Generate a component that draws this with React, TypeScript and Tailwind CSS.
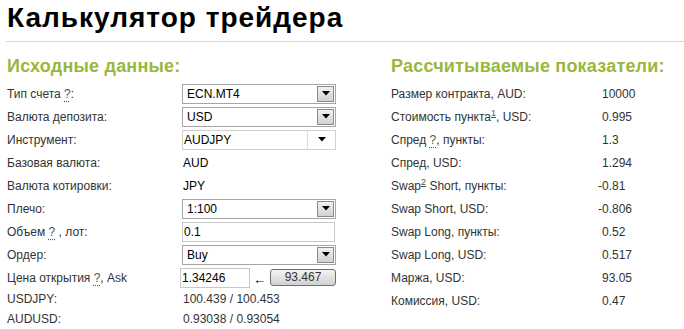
import type { ReactNode } from "react";

const FONT = "font-['Liberation_Sans',Arial,sans-serif]";

function Arrow() {
  return (
    <svg width="8" height="5" viewBox="0 0 8 5" className="block">
      <path d="M0 0H8L4 4.5Z" fill="#000" />
    </svg>
  );
}

function Help() {
  return <span className="text-[#555] underline decoration-dotted underline-offset-[3px]">?</span>;
}

function Note({ n }: { n: string }) {
  return <sup className="text-[9px] text-[#555] underline">{n}</sup>;
}

function SelectBox({ value }: { value: string }) {
  return (
    <div className="flex h-[20px] w-[154px] items-center border border-[#a5a5a5] bg-white">
      <span className="flex-1 pl-[4px] text-[12px] text-black">{value}</span>
      <span className="mr-[1px] flex h-[16px] w-[17px] items-center justify-center border border-[#8a8a8a] bg-gradient-to-b from-[#f0f0f0] to-[#d2d2d2]">
        <Arrow />
      </span>
    </div>
  );
}

function Combo({ value }: { value: string }) {
  return (
    <div className="flex h-[20px] w-[154px] items-center border border-[#d0d0d0] bg-white">
      <span className="flex-1 pl-[1px] text-[12px] text-black">{value}</span>
      <span className="flex h-full w-[28px] items-center justify-center border-l border-[#dcdcdc]">
        <Arrow />
      </span>
    </div>
  );
}

function Input({ value, w }: { value: string; w: string }) {
  return (
    <div className={`flex h-[20px] items-center border border-[#c8c8c8] bg-white pl-[1px] text-[12px] text-black ${w}`}>
      {value}
    </div>
  );
}

function Row({ label, children, h = "h-[23px]" }: { label: ReactNode; children: ReactNode; h?: string }) {
  return (
    <>
      <div className={`flex items-center ${h}`}>
        <span>{label}</span>
      </div>
      <div className={`flex items-center ${h}`}>{children}</div>
    </>
  );
}

const RESULTS: { label: ReactNode; value: string }[] = [
  { label: "Размер контракта, AUD:", value: "10000" },
  { label: <>Стоимость пункта<Note n="1" />, USD:</>, value: "0.995" },
  { label: <>Спред <Help />, пункты:</>, value: "1.3" },
  { label: "Спред, USD:", value: "1.294" },
  { label: <>Swap<Note n="2" /> Short, пункты:</>, value: "-0.81" },
  { label: "Swap Short, USD:", value: "-0.806" },
  { label: "Swap Long, пункты:", value: "0.52" },
  { label: "Swap Long, USD:", value: "0.517" },
  { label: "Маржа, USD:", value: "93.05" },
  { label: "Комиссия, USD:", value: "0.47" },
];

export default function App() {
  return (
    <div className={`h-[329px] w-[684px] overflow-hidden bg-white text-[12px] text-[#333] ${FONT}`}>
      <h1 className="pl-[7px] pt-[1px] text-[28px] font-bold leading-[34px] tracking-[1px] text-black">
        Калькулятор трейдера
      </h1>
      <div className="ml-[6px] mt-[6px] border-t border-[#d4d4d4]" />

      <div className="mt-[13px] flex">
        {/* left: inputs */}
        <section className="w-[391px] pl-[7px]">
          <h2 className="text-[18px] font-bold leading-[22px] tracking-[0.2px] text-[#9ab73c]">Исходные данные:</h2>
          <div className="mt-[5px] grid grid-cols-[175px_154px]">
            <Row label={<>Тип счета <Help />:</>}>
              <SelectBox value="ECN.MT4" />
            </Row>
            <Row label="Валюта депозита:">
              <SelectBox value="USD" />
            </Row>
            <Row label="Инструмент:">
              <Combo value="AUDJPY" />
            </Row>
            <Row label="Базовая валюта:">
              <span className="pl-[1px] text-black">AUD</span>
            </Row>
            <Row label="Валюта котировки:">
              <span className="pl-[1px] text-black">JPY</span>
            </Row>
            <Row label="Плечо:">
              <SelectBox value="1:100" />
            </Row>
            <Row label={<>Объем <Help /> , лот:</>}>
              <Input value="0.1" w="w-[153px]" />
            </Row>
            <Row label="Ордер:">
              <SelectBox value="Buy" />
            </Row>
            <Row label={<>Цена открытия <Help />, Ask</>}>
              <Input value="1.34246" w="w-[70px] -ml-[2px]" />
              <span className="ml-[3px] mt-[5px] text-[13px] text-black">←</span>
              <button className="ml-[4px] h-[17px] w-[66px] rounded-[3px] border border-[#707070] bg-gradient-to-b from-[#f4f4f4] to-[#d0d0d0] text-[12px] leading-[15px] text-[#333]">
                93.467
              </button>
            </Row>
            <Row label="USDJPY:" h="h-[20px]">
              <span className="pl-[1px]">100.439 / 100.453</span>
            </Row>
            <Row label="AUDUSD:" h="h-[20px]">
              <span className="pl-[1px]">0.93038 / 0.93054</span>
            </Row>
          </div>
        </section>

        {/* right: results */}
        <section className="flex-1">
          <h2 className="text-[18px] font-bold leading-[22px] tracking-[0.2px] text-[#9ab73c]">Рассчитываемые показатели:</h2>
          <div className="mt-[5px] grid grid-cols-[211px_1fr]">
            {RESULTS.map((r, i) => (
              <Row key={i} label={r.label}>
                <span className={r.value.startsWith("-") ? "-ml-[4px]" : ""}>{r.value}</span>
              </Row>
            ))}
          </div>
        </section>
      </div>
    </div>
  );
}
